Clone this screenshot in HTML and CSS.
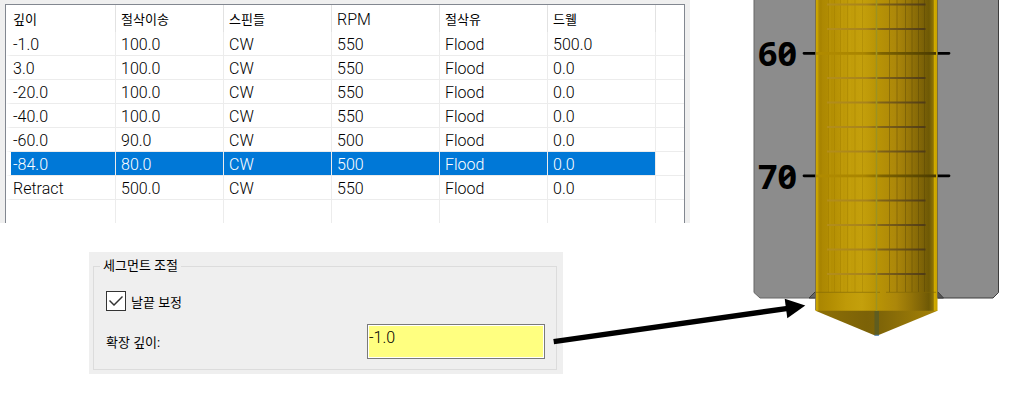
FILE: index.html
```
<!DOCTYPE html>
<html lang="ko">

<head>
    <meta charset="UTF-8">
    <meta name="viewport" content="width=device-width, initial-scale=1.0">
    <title>세그먼트 조절</title>
    <link rel="stylesheet" href="styles.css">
</head>

<body>
    <main class="layout">
        <div class="settings">
            <!-- Depth segment list -->
            <section class="list-frame">
                <table class="segment-table">
                    <thead>
                        <tr>
                            <th>깊이</th>
                            <th>절삭이송</th>
                            <th>스핀들</th>
                            <th class="latin">RPM</th>
                            <th>절삭유</th>
                            <th>드웰</th>
                            <th class="rest"></th>
                        </tr>
                    </thead>
                    <tbody>
                        <tr><td>-1.0</td><td>100.0</td><td>CW</td><td>550</td><td>Flood</td><td>500.0</td><td></td></tr>
                        <tr><td>3.0</td><td>100.0</td><td>CW</td><td>550</td><td>Flood</td><td>0.0</td><td></td></tr>
                        <tr><td>-20.0</td><td>100.0</td><td>CW</td><td>550</td><td>Flood</td><td>0.0</td><td></td></tr>
                        <tr><td>-40.0</td><td>100.0</td><td>CW</td><td>550</td><td>Flood</td><td>0.0</td><td></td></tr>
                        <tr><td>-60.0</td><td>90.0</td><td>CW</td><td>500</td><td>Flood</td><td>0.0</td><td></td></tr>
                        <tr class="selected"><td>-84.0</td><td>80.0</td><td>CW</td><td>500</td><td>Flood</td><td>0.0</td><td></td></tr>
                        <tr><td>Retract</td><td>500.0</td><td>CW</td><td>550</td><td>Flood</td><td>0.0</td><td></td></tr>
                        <tr class="empty"><td></td><td></td><td></td><td></td><td></td><td></td><td></td></tr>
                    </tbody>
                </table>
            </section>

            <!-- Segment adjustment -->
            <section class="adjust-panel">
                <fieldset class="adjust-group">
                    <legend>세그먼트 조절</legend>
                    <div class="field">
                        <input type="checkbox" id="tipComp" class="tip-check" checked>
                        <label for="tipComp">날끝 보정</label>
                    </div>
                    <div class="field depth-field">
                        <label for="extraDepth">확장 깊이:</label>
                        <input type="text" id="extraDepth" class="depth-input" value="-1.0">
                    </div>
                </fieldset>
                <!-- Arrow from the depth box to the drill tip -->
                <svg class="arrow" width="254" height="52" viewBox="552 295 254 52" aria-hidden="true">
                    <path d="M553.7 341.7L788 308.3" stroke="#000" stroke-width="5.4" />
                    <path d="M784.7 298.7L805.3 305.6L787.3 318.2Z" />
                </svg>
            </section>
        </div>

        <!-- Drill and part -->
        <svg class="drill" viewBox="690 0 345 401" role="img" aria-label="Drill">
            <defs>
                <linearGradient id="body">
                    <stop offset="0" stop-color="#cba500" />
                    <stop offset="0.015" stop-color="#cba500" />
                    <stop offset="0.03" stop-color="#aa8602" />
                    <stop offset="0.14" stop-color="#b48f03" />
                    <stop offset="0.25" stop-color="#bf9a08" />
                    <stop offset="0.38" stop-color="#c4a00c" />
                    <stop offset="0.5" stop-color="#b99405" />
                    <stop offset="0.66" stop-color="#ac870a" />
                    <stop offset="0.78" stop-color="#947408" />
                    <stop offset="0.88" stop-color="#7c6207" />
                    <stop offset="0.93" stop-color="#6e5905" />
                    <stop offset="0.965" stop-color="#8d7305" />
                    <stop offset="0.975" stop-color="#d0ab00" />
                    <stop offset="1" stop-color="#c4a000" />
                </linearGradient>
                <linearGradient id="tip">
                    <stop offset="0" stop-color="#8e7005" />
                    <stop offset="0.42" stop-color="#7c6207" />
                    <stop offset="0.52" stop-color="#7e6408" />
                    <stop offset="1" stop-color="#a68307" />
                </linearGradient>
                <linearGradient id="minorLine">
                    <stop offset="0" stop-color="#b38e1c" />
                    <stop offset="0.4" stop-color="#a7831c" />
                    <stop offset="0.55" stop-color="#80631a" />
                    <stop offset="1" stop-color="#4e3b16" />
                </linearGradient>
                <linearGradient id="majorLine">
                    <stop offset="0" stop-color="#b18b00" />
                    <stop offset="0.4" stop-color="#a98500" />
                    <stop offset="0.55" stop-color="#7e6300" />
                    <stop offset="1" stop-color="#493a00" />
                </linearGradient>
            </defs>

            <g fill="#8c8c8c" stroke="#3c3c3c">
                <path d="M754 -1V292.500L760 298H816V-1Z" stroke="#666" />
                <path d="M998.500 -1V292.500L993 298H937V-1Z" />
                <path d="M809 298L815.500 291.500V298Z" fill="#666" />
                <path d="M943.500 298L937.500 291.500V298Z" fill="#555" />
            </g>

            <g stroke="#000" stroke-width="2.800" stroke-linecap="round">
                <path d="M804 53.300H816M937 53.300H949" />
                <path d="M804 175.800H816M937 175.800H949" />
            </g>
            <g class="scale-label">
                <text x="758" y="66">60</text>
                <text x="758" y="189">70</text>
            </g>

            <rect x="815.500" y="-1" width="122" height="312" fill="url(#body)" />
            <path d="M815.500 310.700H937.500L877.500 335.500H875Z" fill="url(#tip)" />

            <path d="M821 0V292M828.500 0V292M834.500 0V292M840.500 0V292M847.500 0V292M855 0V292M862.500 0V292" stroke="#9b7900" opacity="0.35" />
            <path d="M830 0V292M842 0V292M850 0V292" stroke="#d0ad18" opacity="0.35" />
            <path d="M889.500 0V292M897 0V292M905.500 0V292M912 0V292M918.500 0V292M924.500 0V292" stroke="#4b3c04" opacity="0.35" />
            <path d="M815.500 0V310" stroke="#6b6455" opacity="0.700" />
            <path d="M937.500 0V298" stroke="#6b6455" opacity="0.700" />

            <g fill="url(#minorLine)">
                <rect x="827" y="3.500" width="98.500" height="2" />
                <rect x="827" y="28" width="98.500" height="2" />
                <rect x="827" y="77" width="98.500" height="2" />
                <rect x="827" y="101.500" width="98.500" height="2" />
                <rect x="827" y="126" width="98.500" height="2" />
                <rect x="827" y="150.500" width="98.500" height="2" />
                <rect x="827" y="199.500" width="98.500" height="2" />
                <rect x="827" y="224" width="98.500" height="2" />
                <rect x="827" y="248.500" width="98.500" height="2" />
                <rect x="827" y="273" width="98.500" height="2" />
            </g>
            <g fill="url(#majorLine)">
                <rect x="816" y="52" width="120" height="2.800" />
                <rect x="816" y="174.500" width="120" height="2.800" />
            </g>
            <path d="M816 292.300H880M886 292.300H936" stroke="#806707" opacity="0.600" />
            <path d="M876.500 0V311" stroke="#9c9223" stroke-width="1.500" />
            <path d="M874.500 311H879V335H874.500Z" fill="#5f5d20" />
            <path d="M874.500 335.300H879" stroke="#5287c0" />
        </svg>
    </main>
</body>

</html>
```
FILE: styles.css
```
body {
    margin: 0;
    background-color: #fff;
    color: #000;
    font-family: Roboto, "Noto Sans CJK KR", sans-serif;
    font-size: 16px;
}

.layout {
    display: grid;
    grid-template-columns: 2fr 1fr;
    align-items: start;
}

/* Segment list */
.list-frame {
    padding: 4px 5px 0;
    background-color: #efefef;
}

.segment-table {
    width: 100%;
    table-layout: fixed;
    border: 1px solid #828790;
    border-bottom: none;
    border-spacing: 0;
    background-color: #fff;
    font-weight: 300;
}

.segment-table th,
.segment-table td {
    box-sizing: border-box;
    width: 108px;
    height: 24px;
    padding: 2px 5px 0;
    border-right: 1px solid #ececec;
    border-bottom: 1px solid #ececec;
    line-height: 20px;
    text-align: left;
    white-space: nowrap;
}

.segment-table th {
    height: 27px;
    border-right-color: #e2e2e2;
    border-bottom: none;
    font-size: 13px;
    font-weight: 400;
}

.segment-table th.latin {
    font-size: 16px;
    font-weight: 300;
}

.segment-table th:first-child,
.segment-table td:first-child {
    width: 110px;
    padding-left: 2px;
    border-left: 5px solid #fff;
}

.segment-table th:last-child,
.segment-table td:last-child {
    border-right: none;
}

.segment-table th.rest {
    width: auto;
}

.segment-table .selected td:not(:last-child) {
    background-color: #0078d7;
    color: #fff;
}

.segment-table .empty td {
    height: 23px;
    border-bottom: none;
}

/* Segment adjustment panel */
.adjust-panel {
    position: relative;
    margin: 29px 127px 0 89px;
    padding: 4px 6px 4px 4px;
    background-color: #efefef;
    font-size: 13px;
}

.adjust-group {
    margin: 0;
    padding: 15px 11px 10px 12px;
    border: 1px solid #dcdcdc;
}

.adjust-group legend {
    margin-left: -6px;
    padding: 0 3px;
    line-height: 20px;
}

.field {
    display: flex;
    align-items: center;
    gap: 5px;
}

.depth-field {
    justify-content: space-between;
    margin-top: 13px;
}

.tip-check {
    appearance: none;
    box-sizing: border-box;
    width: 20px;
    height: 20px;
    margin: 0;
    border: 1px solid #333;
    background-color: #fff;
}

.tip-check:checked::before {
    content: "";
    display: block;
    width: 18px;
    height: 18px;
    background-color: #333;
    clip-path: polygon(2px 9px, 3px 8px, 7px 12px, 15px 4px, 16px 5px, 7px 14px);
}

.depth-input {
    box-sizing: border-box;
    width: 178px;
    height: 35px;
    padding: 0 1px 8px;
    border: 1px solid #7a7a7a;
    border-radius: 0;
    background-color: #ffff80;
    box-shadow: inset 0 0 0 1px #fff;
    font-family: inherit;
    font-size: 16px;
    font-weight: 300;
}

.arrow {
    position: absolute;
    top: 43px;
    right: -243px;
}

/* Drill drawing */
.drill {
    display: block;
    width: 100%;
}

.scale-label {
    font-family: "Noto Sans", sans-serif;
    font-size: 34px;
    font-weight: 700;
    font-variant-numeric: slashed-zero;
}
```
